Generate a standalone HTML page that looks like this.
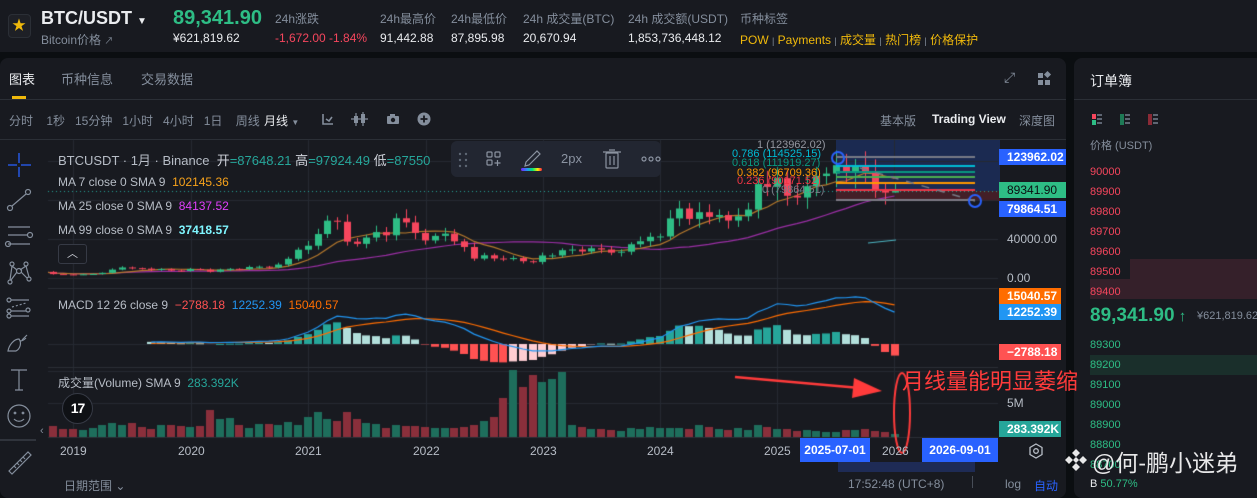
<!DOCTYPE html>
<html><head><meta charset="utf-8">
<style>
*{margin:0;padding:0;box-sizing:border-box}
body{width:1257px;height:486px;overflow:hidden;background:#0b0e11;font-family:"Liberation Sans","Noto Sans CJK SC",sans-serif;position:relative;color:#eaecef}
.a{position:absolute;white-space:nowrap}
.g{color:#848e9c}
.w{color:#eaecef}
.gr{color:#2ebd85}
.rd{color:#f6465d}
.yl{color:#f0b90b}
.f12{font-size:12px}
.f11{font-size:11px}
.f13{font-size:13px}
canvas{position:absolute;left:0;top:0}
.pl{position:absolute;color:#fff;font-size:12px;padding-left:8px;line-height:16px;height:16px;width:67px;font-weight:bold}
</style></head><body>
<div class="a" style="left:0;top:0;width:1257px;height:52px;background:#181a20"></div>
<div class="a" style="left:0;top:58px;width:1066px;height:440px;background:#181a20;border-radius:8px"></div>
<div class="a" style="left:1074px;top:58px;width:190px;height:440px;background:#181a20;border-radius:8px"></div>
<div class="a" style="left:0;top:99px;width:1066px;height:1px;background:#2b2f36"></div>
<div class="a" style="left:0;top:139px;width:1066px;height:1px;background:#2b2f36"></div>
<div class="a" style="left:1074px;top:99px;width:190px;height:1px;background:#2b2f36"></div>
<div class="a" style="left:1130px;top:259px;width:127px;height:20px;background:#35202a"></div>
<div class="a" style="left:1090px;top:279px;width:167px;height:20px;background:#35202a"></div>
<div class="a" style="left:1090px;top:355px;width:167px;height:20px;background:#1a2f2b"></div>
<div class="a" style="left:836px;top:140px;width:164px;height:51px;background:rgba(41,98,255,0.22)"></div>
<div class="a" style="left:836px;top:191px;width:164px;height:10px;background:rgba(242,54,69,0.2)"></div>
<div class="a" style="left:838px;top:462px;width:137px;height:10px;background:#1e2b55"></div>

<canvas id="c" width="1257" height="486"></canvas>

<div class="a" style="left:8px;top:14px;width:23px;height:24px;border:1px solid #2b2f36;border-radius:4px;background:#1e2026"></div>
<div class="a" style="left:12px;top:15px;font-size:14px;color:#f0b90b">★</div>
<div class="a w" style="left:41px;top:8px;font-size:18px;font-weight:bold">BTC/USDT <span style="font-size:10px">▼</span></div>
<div class="a g f12" style="left:41px;top:31px">Bitcoin价格 <span style="font-size:9px">↗</span></div>
<div class="a gr" style="left:173px;top:7px;font-size:20px;font-weight:bold">89,341.90</div>
<div class="a w f12" style="left:173px;top:31px">¥621,819.62</div>
<div class="a g f12" style="left:275px;top:10px">24h涨跌</div>
<div class="a rd f12" style="left:275px;top:31px">-1,672.00 -1.84%</div>
<div class="a g f12" style="left:380px;top:10px">24h最高价</div>
<div class="a w f12" style="left:380px;top:31px">91,442.88</div>
<div class="a g f12" style="left:451px;top:10px">24h最低价</div>
<div class="a w f12" style="left:451px;top:31px">87,895.98</div>
<div class="a g f12" style="left:523px;top:10px">24h 成交量(BTC)</div>
<div class="a w f12" style="left:523px;top:31px">20,670.94</div>
<div class="a g f12" style="left:628px;top:10px">24h 成交额(USDT)</div>
<div class="a w f12" style="left:628px;top:31px">1,853,736,448.12</div>
<div class="a g f12" style="left:740px;top:10px">币种标签</div>
<div class="a yl f12" style="left:740px;top:31px">POW <span class="g" style="font-size:9px">|</span> Payments <span class="g" style="font-size:9px">|</span> 成交量 <span class="g" style="font-size:9px">|</span> 热门榜 <span class="g" style="font-size:9px">|</span> 价格保护</div>

<div class="a w f13" style="left:9px;top:69px">图表</div>
<div class="a" style="left:12px;top:96px;width:14px;height:3px;background:#f0b90b"></div>
<div class="a g f13" style="left:61px;top:69px">币种信息</div>
<div class="a g f13" style="left:141px;top:69px">交易数据</div>
<div class="a g" style="left:1004px;top:69px;font-size:14px">⤢</div>
<div class="a" style="left:1038px;top:73px;width:5px;height:5px;background:#848e9c"></div>
<div class="a" style="left:1038px;top:80px;width:5px;height:5px;background:#848e9c"></div>
<div class="a" style="left:1045px;top:80px;width:5px;height:5px;background:#848e9c"></div>
<div class="a" style="left:1045px;top:72px;width:5px;height:5px;background:#848e9c;transform:rotate(45deg)"></div>

<div class="a g f12" style="left:9px;top:112px">分时&nbsp;&nbsp;&nbsp; 1秒&nbsp;&nbsp; 15分钟&nbsp;&nbsp; 1小时&nbsp;&nbsp; 4小时&nbsp;&nbsp; 1日&nbsp;&nbsp;&nbsp; 周线</div>
<div class="a w f12" style="left:264px;top:112px">月线 <span class="g" style="font-size:8px">▼</span></div>
<svg class="a" style="left:318px;top:110px" width="120" height="18" viewBox="0 0 120 18">
<path d="M5 4v10h10M8 9l3 2 3-4" stroke="#848e9c" stroke-width="1.6" fill="none"/>
<rect x="36" y="6" width="4" height="7" fill="#848e9c"/><rect x="43" y="4" width="4" height="9" fill="#848e9c"/><path d="M38 3v13M45 2v14M33 9h17" stroke="#848e9c" stroke-width="1.2"/>
<rect x="69" y="6" width="12" height="8" rx="1" fill="#848e9c"/><rect x="72" y="4" width="5" height="3" fill="#848e9c"/><circle cx="75" cy="10" r="2.2" fill="#181a20"/>
<circle cx="106" cy="9" r="6.5" fill="#848e9c"/><path d="M106 5.5v7M102.5 9h7" stroke="#181a20" stroke-width="1.8"/>
</svg>
<div class="a g f12" style="left:880px;top:112px">基本版</div>
<div class="a w f12" style="left:932px;top:112px;font-weight:bold">Trading View</div>
<div class="a g f12" style="left:1019px;top:112px">深度图</div>

<svg class="a" style="left:0;top:140px" width="48" height="346" viewBox="0 0 48 346">
<path d="M19 13v10M19 27v10M8 25h9M21 25h10" stroke="#2962ff" stroke-width="1.3"/>
<g stroke="#848e9c" stroke-width="1.2" fill="none">
<circle cx="10" cy="68" r="2.5"/><circle cx="28" cy="52" r="2.5"/><path d="M12 66l14-12"/>
<path d="M8 87h22M8 95h20M8 104h22"/><circle cx="30" cy="95" r="2.5"/><circle cx="8" cy="104" r="2.5"/>
<circle cx="12" cy="124" r="2"/><circle cx="26" cy="124" r="2"/><circle cx="10" cy="142" r="2"/><circle cx="29" cy="139" r="2"/><circle cx="19" cy="131" r="2.5"/><path d="M12 126l-2 14M12 126l5 4M26 126l-6 4M26 126l3 11M21 132l6 6M17 132l-6 8"/>
<circle cx="9" cy="160" r="2"/><circle cx="9" cy="171" r="2"/><circle cx="9" cy="176" r="2"/><circle cx="28" cy="170" r="2"/><path d="M11 160h18M11 171h15M11 176h18"/><path d="M12 167l14-4" stroke-dasharray="2 2"/>
<path d="M8 211h8c4-2 6-8 3-12-5 0-10 6-11 12zM20 201c3 0 5-2 6-3"/><path d="M22 200l5-5"/>
<path d="M11 230h16M19 230v20M15 250h8"/>
<circle cx="19" cy="276" r="11"/><circle cx="15" cy="273" r="0.8"/><circle cx="23" cy="273" r="0.8"/><path d="M14 279c3 3 7 3 10 0"/>
<path d="M9 331l19-19 3 3-19 19z"/><path d="M14 326l2 2M17 323l2 2M20 320l2 2M23 317l2 2"/>
</g>
<path d="M0 300h36" stroke="#474d57" stroke-width="1"/>
</svg>
<div class="a g" style="left:40px;top:425px;font-size:11px">‹</div>

<div class="a" style="left:58px;top:150px;font-size:13px;color:#b7bdc6">BTCUSDT · 1月 · Binance&nbsp; <span style="color:#d1d4dc">开</span><span style="color:#26a69a">=87648.21</span> <span style="color:#d1d4dc">高</span><span style="color:#26a69a">=97924.49</span> <span style="color:#d1d4dc">低</span><span style="color:#26a69a">=87550</span></div>
<div class="a" style="left:58px;top:175px;font-size:12px;color:#b7bdc6">MA 7 close 0 SMA 9&nbsp; <span style="color:#f7a21b">102145.36</span></div>
<div class="a" style="left:58px;top:199px;font-size:12px;color:#b7bdc6">MA 25 close 0 SMA 9&nbsp; <span style="color:#e040fb">84137.52</span></div>
<div class="a" style="left:58px;top:223px;font-size:12px;color:#b7bdc6">MA 99 close 0 SMA 9&nbsp; <span style="color:#7ff6ff;font-weight:bold">37418.57</span></div>
<div class="a" style="left:58px;top:244px;width:29px;height:20px;border:1px solid #363a45;border-radius:3px;background:#181a20;color:#d1d4dc;font-size:11px;text-align:center;line-height:18px">︿</div>
<div class="a" style="left:58px;top:298px;font-size:12px;color:#b7bdc6">MACD 12 26 close 9&nbsp; <span style="color:#ff5252">−2788.18</span>&nbsp; <span style="color:#2196f3">12252.39</span>&nbsp; <span style="color:#ff6d00">15040.57</span></div>
<div class="a" style="left:58px;top:374px;font-size:12px;color:#b7bdc6">成交量(Volume) SMA 9&nbsp; <span style="color:#26a69a">283.392K</span></div>
<div class="a" style="left:62px;top:393px;width:31px;height:31px;border-radius:50%;background:#0f1115;border:1px solid #363a45;color:#fff;font-weight:bold;font-size:14px;text-align:center;line-height:29px;letter-spacing:-1px">17</div>

<div class="a" style="left:451px;top:141px;width:210px;height:36px;background:#222631;border-radius:6px"></div>
<svg class="a" style="left:451px;top:141px" width="210" height="36" viewBox="0 0 210 36">
<g fill="#5d6673"><circle cx="9" cy="13" r="1.2"/><circle cx="15" cy="13" r="1.2"/><circle cx="9" cy="19" r="1.2"/><circle cx="15" cy="19" r="1.2"/><circle cx="9" cy="25" r="1.2"/><circle cx="15" cy="25" r="1.2"/></g>
<g stroke="#8b93a1" stroke-width="1.2" fill="none"><rect x="36" y="11" width="5" height="5" rx="1"/><rect x="44" y="11" width="5" height="5" rx="1"/><rect x="36" y="19" width="5" height="5" rx="1"/><path d="M46.5 19v6M43.5 22h6"/>
<path d="M75 21l11-11 3 3-11 11-4 1z"/>
<rect x="155" y="12" width="12" height="15" rx="1"/><path d="M152 11h18M158 9h6M159 15v9M163 15v9"/>
<circle cx="193" cy="18" r="2"/><circle cx="200" cy="18" r="2"/><circle cx="207" cy="18" r="2"/></g>
<defs><linearGradient id="rb"><stop offset="0" stop-color="#7b1fff"/><stop offset=".3" stop-color="#2196f3"/><stop offset=".55" stop-color="#00e676"/><stop offset=".8" stop-color="#ffea00"/><stop offset="1" stop-color="#ff1744"/></linearGradient></defs>
<rect x="70" y="27" width="21" height="3" rx="1.5" fill="url(#rb)"/>
</svg>
<div class="a" style="left:561px;top:151px;font-size:13px;color:#8b93a1">2px</div>

<div class="a" style="left:757px;top:139px;font-size:11px;color:#9598a1">1 (123962.02)</div>
<div class="a" style="left:732px;top:148px;font-size:11px;color:#00bcd4">0.786 (114525.15)</div>
<div class="a" style="left:732px;top:157px;font-size:11px;color:#089981">0.618 (111919.27)</div>
<div class="a" style="left:737px;top:167px;font-size:11px;color:#ff9800">0.382 (96709.36)</div>
<div class="a" style="left:737px;top:175px;font-size:11px;color:#f23645">0.236 (90171.52)</div>
<div class="a" style="left:762px;top:184px;font-size:11px;color:#787b86">0 (79864.51)</div>

<div class="pl" style="left:999px;top:149px;background:#2962ff">123962.02</div>
<div class="pl" style="left:999px;top:182px;background:#2ebd85;color:#0b0e11;font-weight:normal">89341.90</div>
<div class="pl" style="left:999px;top:201px;background:#2962ff">79864.51</div>
<div class="a" style="left:1007px;top:232px;font-size:12px;color:#b7bdc6">40000.00</div>
<div class="a" style="left:1007px;top:271px;font-size:12px;color:#b7bdc6">0.00</div>
<div class="pl" style="left:999px;top:288px;background:#ff6d00;width:62px">15040.57</div>
<div class="pl" style="left:999px;top:304px;background:#2196f3;width:62px">12252.39</div>
<div class="pl" style="left:999px;top:344px;background:#ff5252;width:62px">−2788.18</div>
<div class="a" style="left:1007px;top:396px;font-size:12px;color:#b7bdc6">5M</div>
<div class="pl" style="left:999px;top:421px;background:#26a69a;width:62px">283.392K</div>
<svg class="a" style="left:1028px;top:443px" width="16" height="16" viewBox="0 0 16 16"><path d="M8 1l6 3.5v7L8 15l-6-3.5v-7z" stroke="#b7bdc6" fill="none" stroke-width="1.3"/><circle cx="8" cy="8" r="2.3" stroke="#b7bdc6" fill="none" stroke-width="1.3"/></svg>

<div class="a f12" style="left:60px;top:444px;color:#b7bdc6">2019</div>
<div class="a f12" style="left:178px;top:444px;color:#b7bdc6">2020</div>
<div class="a f12" style="left:295px;top:444px;color:#b7bdc6">2021</div>
<div class="a f12" style="left:413px;top:444px;color:#b7bdc6">2022</div>
<div class="a f12" style="left:530px;top:444px;color:#b7bdc6">2023</div>
<div class="a f12" style="left:647px;top:444px;color:#b7bdc6">2024</div>
<div class="a f12" style="left:764px;top:444px;color:#b7bdc6">2025</div>
<div class="a f12" style="left:882px;top:444px;color:#b7bdc6">2026</div>
<div class="a" style="left:800px;top:438px;width:70px;height:24px;background:#2962ff;color:#fff;font-size:12px;font-weight:bold;text-align:center;line-height:24px">2025-07-01</div>
<div class="a" style="left:922px;top:438px;width:76px;height:24px;background:#2962ff;color:#fff;font-size:12px;font-weight:bold;text-align:center;line-height:24px">2026-09-01</div>
<div class="a g f12" style="left:64px;top:477px">日期范围 ⌄</div>
<div class="a g f12" style="left:848px;top:477px">17:52:48 (UTC+8)</div>
<div class="a" style="left:972px;top:476px;width:1px;height:12px;background:#474d57"></div>
<div class="a g f12" style="left:1005px;top:477px">log</div>
<div class="a f12" style="left:1034px;top:477px;color:#2962ff">自动</div>

<div class="a" style="left:902px;top:364px;font-size:22px;color:#ff3b3b">月线量能明显萎缩</div>

<div class="a w" style="left:1090px;top:71px;font-size:14px">订单簿</div>
<svg class="a" style="left:1092px;top:113px" width="80" height="14" viewBox="0 0 80 14">
<rect x="0" y="1" width="4" height="5" fill="#f6465d"/><rect x="0" y="7" width="4" height="5" fill="#2ebd85"/><g fill="#5e6673"><rect x="5" y="1" width="5" height="2"/><rect x="5" y="5" width="5" height="2"/><rect x="5" y="9" width="5" height="2"/></g>
<rect x="28" y="1" width="4" height="11" fill="#1e7a56"/><g fill="#5e6673"><rect x="33" y="1" width="5" height="2"/><rect x="33" y="5" width="5" height="2"/><rect x="33" y="9" width="5" height="2"/></g>
<rect x="56" y="1" width="4" height="11" fill="#8a2a36"/><g fill="#5e6673"><rect x="61" y="1" width="5" height="2"/><rect x="61" y="5" width="5" height="2"/><rect x="61" y="9" width="5" height="2"/></g>
</svg>
<div class="a g f11" style="left:1090px;top:137px">价格 (USDT)</div>
<div class="a rd f11" style="left:1090px;top:162px;line-height:20px">90000<br>89900<br>89800<br>89700<br>89600<br>89500<br>89400</div>
<div class="a gr" style="left:1090px;top:305px;font-size:19px;font-weight:bold">89,341.90<span style="font-size:15px"> ↑</span></div>
<div class="a g f11" style="left:1197px;top:310px">¥621,819.62</div>
<div class="a gr f11" style="left:1090px;top:335px;line-height:20px">89300<br>89200<br>89100<br>89000<br>88900<br>88800<br>88700</div>
<div class="a w f11" style="left:1090px;top:478px">B <span class="gr">50.77%</span></div>

<svg class="a" style="left:1062px;top:446px" width="28" height="28" viewBox="0 0 28 28"><g fill="#fff" opacity=".9"><path d="M14 3l4 4-4 4-4-4z"/><path d="M14 17l4 4-4 4-4-4z"/><path d="M7 10l4 4-4 4-4-4z"/><path d="M21 10l4 4-4 4-4-4z"/><path d="M14 11l3 3-3 3-3-3z"/></g></svg>
<div class="a" style="left:1092px;top:444px;font-size:23px;color:rgba(255,255,255,0.9)">@何-鹏小迷弟</div>

<script>
var cv=document.getElementById('c'),x=cv.getContext('2d');
var C=[6.3,4.0,3.7,3.4,3.8,4.1,5.3,8.6,10.8,10.1,9.6,8.3,9.2,7.6,7.2,9.3,8.6,6.4,8.6,9.4,9.1,11.3,11.6,10.8,13.8,19.7,29.0,33.1,45.1,58.8,57.7,37.3,35.0,41.5,47.1,43.8,61.3,57.0,46.2,38.5,43.2,45.5,37.6,31.8,19.9,23.3,20.0,19.4,20.5,17.2,16.5,23.1,23.1,28.5,29.2,27.2,30.5,29.2,26.0,27.0,34.6,37.7,42.3,42.6,61.1,71.3,60.6,67.5,62.7,64.6,58.9,63.3,70.2,96.4,93.4,102.4,84.3,82.5,94.2,104.6,107.1,115.7,108.2,114.0,109.6,90.4,87.6,89.3];
var V=[9,11,8,8,7,9,12,14,12,14,10,8,12,12,11,10,11,27,18,19,12,9,13,13,12,15,12,20,25,18,16,25,18,14,13,9,12,11,11,10,9,9,9,10,12,16,20,39,67,50,62,55,58,65,12,10,8,8,7,6,9,8,10,9,9,9,8,12,10,8,7,9,7,12,10,8,8,6,7,6,5,5,7,7,8,6,5,3];
var N=C.length;function X(i){return 43.7+i*9.78}function Y(k){return 278-k*0.975}
x.save();x.beginPath();x.rect(48,140,950,298);x.clip();
x.strokeStyle='#262a32';x.lineWidth=1;
[73,191,308,426,543,660,777,894].forEach(function(v){x.beginPath();x.moveTo(v+.5,140);x.lineTo(v+.5,437);x.stroke();});
[161,200,239,278,344,371,403].forEach(function(v){x.beginPath();x.moveTo(48,v+.5);x.lineTo(998,v+.5);x.stroke();});
x.strokeStyle='#2b2f36';[288,367,437].forEach(function(v){x.beginPath();x.moveTo(48,v+.5);x.lineTo(998,v+.5);x.stroke();});
x.strokeStyle='#26a69a';x.setLineDash([1,3]);x.beginPath();x.moveTo(48,191.5);x.lineTo(998,191.5);x.stroke();x.setLineDash([]);
function ma(n,col){x.strokeStyle=col;x.lineWidth=1.2;x.beginPath();for(var i=0;i<N;i++){var s=0,c=0;for(var j=Math.max(0,i-n+1);j<=i;j++){s+=C[j];c++;}var px=X(i),py=Y(s/c);if(i)x.lineTo(px,py);else x.moveTo(px,py);}x.stroke();}
ma(25,'#9c2fa6');ma(7,'#b87a2c');
x.strokeStyle='#4db6c4';x.beginPath();x.moveTo(868,243);x.lineTo(896,240);x.stroke();
for(var i=0;i<N;i++){var o=i?C[i-1]:6.6,c=C[i];if(i==N-1)o=87.65;var up=c>=o;var h=Math.max(o,c)*(1.06+((i*37)%10)/100),l=Math.min(o,c)*(0.92-((i*53)%8)/100);if(i==N-1){h=97.9;l=87.55;}
var col=up?'#2ebd85':'#f6465d';x.fillStyle=col;var cx=Math.round(X(i));x.fillRect(cx,Y(h),1,Y(l)-Y(h));var t=Y(Math.max(o,c)),b=Y(Math.min(o,c));x.fillRect(cx-3,t,7,Math.max(1,b-t));
var vc=up?'#1e6e5c':'#8a2f3b';x.fillStyle=vc;x.fillRect(cx-4,437-V[i],8,V[i]);}
function ema(a,n){var k=2/(n+1),r=[a[0]];for(var i=1;i<a.length;i++)r.push(a[i]*k+r[i-1]*(1-k));return r}
var e12=ema(C,12),e26=ema(C,26),dif=[];for(var i=0;i<N;i++)dif.push((e12[i]-e26[i])*1000);var dea=ema(dif,9);
var sc=0.0026,S0=11;
for(var i=S0;i<N;i++){var hv=dif[i]-dea[i],ph=i?dif[i-1]-dea[i-1]:0;var col;if(hv>=0)col=hv>=ph?'#26a69a':'#b2dfdb';else col=hv<ph?'#ff5252':'#ffcdd2';x.fillStyle=col;var hh=hv*sc*1.6;var cx=Math.round(X(i));if(hh>=0)x.fillRect(cx-4,344-hh,8,Math.max(1,hh));else x.fillRect(cx-4,344,8,-hh);}
function ln(a,col){x.strokeStyle=col;x.lineWidth=1.2;x.beginPath();for(var i=S0;i<N;i++){var py=344-a[i]*sc;if(i==S0)x.moveTo(X(i),py);else x.lineTo(X(i),py);}x.stroke();}
ln(dea,'#ff6d00');ln(dif,'#2196f3');
[[157,'#787b86'],[166,'#00bcd4'],[172,'#089981'],[177,'#4caf50'],[183,'#ff9800'],[190,'#f23645'],[200,'#787b86']].forEach(function(a){x.strokeStyle=a[1];x.lineWidth=2;x.beginPath();x.moveTo(836,a[0]);x.lineTo(975,a[0]);x.stroke();});
x.strokeStyle='#787b86';x.lineWidth=1.5;x.setLineDash([8,8]);x.beginPath();x.moveTo(860,168);x.lineTo(975,201);x.stroke();x.setLineDash([]);
x.restore();
x.strokeStyle='#2962ff';x.lineWidth=2;x.beginPath();x.arc(838,158,6,0,7);x.stroke();x.beginPath();x.arc(975,201,6,0,7);x.stroke();
x.strokeStyle='#ff3b3b';x.fillStyle='#ff3b3b';x.lineWidth=2.5;x.beginPath();x.moveTo(735,377);x.lineTo(860,388);x.stroke();
x.beginPath();x.moveTo(882,391);x.lineTo(854,378);x.lineTo(852,398);x.closePath();x.fill();
x.lineWidth=2;x.beginPath();x.ellipse(902,413,8,40,0,0,7);x.stroke();
</script>
</body></html>
